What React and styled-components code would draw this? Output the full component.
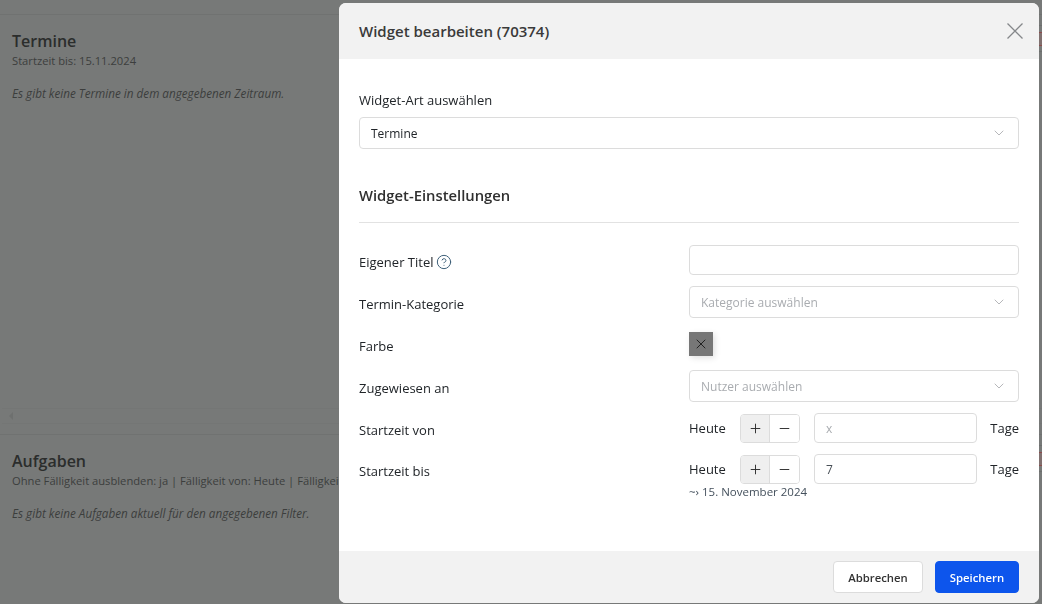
import React from 'react';
import styled, { createGlobalStyle } from 'styled-components';
import { X, ChevronDown, Plus, Minus, CircleHelp } from 'lucide-react';

const GlobalStyle = createGlobalStyle`
  html, body {
    margin: 0;
    padding: 0;
    height: 100%;
    overflow: hidden;
    background: #777978;
  }
  * {
    box-sizing: border-box;
  }
  body {
    font-family: "Open Sans", "Noto Sans", sans-serif;
    font-size: 13px;
    color: #212529;
  }
`;

const Dashboard = styled.div`
  height: 604px;
  padding-top: 14px;
  overflow: hidden;
  display: flex;
  flex-direction: column;
`;

const WidgetCard = styled.section`
  position: relative;
  height: ${({ $height }) => $height}px;
  flex: none;
  border-top: 1px solid #707271;
  padding: 18px 12px 0;
  white-space: nowrap;
`;

const CardActions = styled.div`
  position: absolute;
  top: 10px;
  left: 1020px;
  width: 30px;
  height: 27px;
  padding-top: 6px;
  border-top: 1px solid #6d6f6e;
  border-bottom: 1px solid #6d6f6e;
`;

const DeleteAction = styled.div`
  height: 14px;
  border: 1px solid #8d4c4c;
  background: #80706f;
`;

const Resizer = styled.div`
  height: 16px;
  flex: none;
  margin: 0 0 10px 2px;
  padding-left: 7px;
  display: flex;
  align-items: center;
  border-top: 1px solid #747675;
  border-bottom: 1px solid #747675;
  color: #6e706f;
`;

const WidgetTitle = styled.h2`
  margin: 0;
  font-size: 16px;
  line-height: 17px;
  font-weight: 600;
  color: #2b2d2c;
`;

const WidgetMeta = styled.div`
  margin-top: 3px;
  font-size: 11.2px;
  line-height: 15px;
  color: #3c3e3d;
`;

const WidgetEmpty = styled.p`
  margin: 18px 0 0;
  font-size: 11.7px;
  line-height: 15px;
  font-style: italic;
  color: #3c3e3d;
`;

const Modal = styled.div`
  position: fixed;
  left: 339px;
  top: 3px;
  width: 700px;
  height: 600px;
  display: flex;
  flex-direction: column;
  background: #fff;
  border-radius: 7px;
  overflow: hidden;
`;

const ModalHeader = styled.header`
  height: 56px;
  flex: none;
  padding: 0 16px 0 20px;
  display: flex;
  align-items: center;
  justify-content: space-between;
  background: #f2f2f2;
`;

const ModalTitle = styled.h1`
  margin: 0;
  font-size: 15px;
  font-weight: 600;
  color: #3a3a3a;
`;

const CloseButton = styled.button`
  width: 16px;
  height: 16px;
  padding: 0;
  display: flex;
  border: 0;
  background: none;
  color: #85878a;
`;

const ModalBody = styled.main`
  flex: 1;
  padding: 32px 20px 0;
`;

const FieldLabel = styled.label`
  display: block;
  font-size: 13px;
  line-height: 18px;
  color: #212529;
`;

const Select = styled.div`
  height: 32px;
  margin-top: ${({ $top }) => $top || 0}px;
  padding: 0 11px;
  display: flex;
  align-items: center;
  justify-content: space-between;
  border: 1px solid #dcdcdc;
  border-radius: 4px;
  background: #fff;
  font-size: 12px;
  color: ${({ $placeholder }) => ($placeholder ? '#a9acb0' : '#212529')};

  svg {
    color: #a3a5a8;
  }
`;

const SectionTitle = styled.h3`
  margin: 36px 0 0;
  padding-bottom: 17px;
  border-bottom: 1px solid #e2e2e2;
  font-size: 14.8px;
  line-height: 20px;
  font-weight: 600;
  color: #303030;
`;

const SettingsGrid = styled.div`
  margin-top: 22px;
  display: grid;
  grid-template-columns: 330px 330px;
  row-gap: 11px;
  align-items: center;
`;

const RowLabel = styled(FieldLabel)`
  display: flex;
  align-items: center;
  gap: 3px;
  padding-top: 3px;

  svg {
    color: #3d5f78;
  }
`;

const TextInput = styled.div`
  height: 30px;
  padding: 0 11px;
  display: flex;
  align-items: center;
  border: 1px solid #dcdcdc;
  border-radius: 4px;
  background: #fff;
  font-size: 12px;
  color: ${({ $placeholder }) => ($placeholder ? '#a9acb0' : '#495057')};
`;

const ColorSwatch = styled.div`
  width: 24px;
  height: 24px;
  margin: 3px 0;
  display: flex;
  align-items: center;
  justify-content: center;
  background: #777;
  color: #222;
  box-shadow: 2px 2px 6px rgba(0, 0, 0, 0.12);
`;

const DayControl = styled.div`
  display: flex;
  align-items: center;
`;

const DayText = styled.span`
  font-size: 13px;
  color: #212529;
  width: ${({ $width }) => $width}px;
  text-align: ${({ $align }) => $align || 'left'};
`;

const SignGroup = styled.div`
  width: 60px;
  height: 29px;
  margin-right: 14px;
  display: flex;
  border: 1px solid #dcdcdc;
  border-radius: 4px;
  overflow: hidden;
`;

const SignButton = styled.div`
  flex: ${({ $active }) => ($active ? '0 0 28px' : 1)};
  display: flex;
  align-items: center;
  justify-content: center;
  color: #2a2a2a;
  background: ${({ $active }) => ($active ? '#efefef' : '#fff')};
  & + & {
    border-left: 1px solid #dcdcdc;
  }
`;

const DayInput = styled(TextInput)`
  width: 163px;
`;

const DateHint = styled.div`
  grid-column: 2;
  margin-top: -10px;
  font-size: 11.5px;
  line-height: 14px;
  color: #44505c;
`;

const ModalFooter = styled.footer`
  height: 52px;
  flex: none;
  padding: 10px 20px 0;
  display: flex;
  justify-content: flex-end;
  gap: 12px;
  background: #f2f2f2;
`;

const Button = styled.button`
  height: 32px;
  width: ${({ $primary }) => ($primary ? 84 : 90)}px;
  padding: 0;
  border-radius: 4px;
  border: 1px solid ${({ $primary }) => ($primary ? '#0d55ec' : '#dcdcdc')};
  background: ${({ $primary }) => ($primary ? '#0d55ec' : '#fff')};
  color: ${({ $primary }) => ($primary ? '#fff' : '#333')};
  font-family: inherit;
  font-size: 11.3px;
  font-weight: 600;
`;

const DayRow = ({ placeholder, value }) => (
  <DayControl>
    <DayText $width={51}>Heute</DayText>
    <SignGroup>
      <SignButton $active><Plus size={15} strokeWidth={1.5} /></SignButton>
      <SignButton><Minus size={15} strokeWidth={1.5} /></SignButton>
    </SignGroup>
    <DayInput $placeholder={!!placeholder}>{placeholder || value}</DayInput>
    <DayText $width={42} $align="right">Tage</DayText>
  </DayControl>
);

const App = () => (
  <>
    <GlobalStyle />
    <Dashboard>
      <WidgetCard $height={394}>
        <WidgetTitle>Termine</WidgetTitle>
        <WidgetMeta>Startzeit bis: 15.11.2024</WidgetMeta>
        <WidgetEmpty>Es gibt keine Termine in dem angegebenen Zeitraum.</WidgetEmpty>
        <CardActions><DeleteAction /></CardActions>
      </WidgetCard>
      <Resizer>
        <svg width="5" height="8" viewBox="0 0 5 8"><path d="M4 0L0 4l4 4z" fill="currentColor" /></svg>
      </Resizer>
      <WidgetCard $height={170}>
        <WidgetTitle>Aufgaben</WidgetTitle>
        <WidgetMeta>Ohne Fälligkeit ausblenden: ja | Fälligkeit von: Heute | Fälligkeit</WidgetMeta>
        <WidgetEmpty>Es gibt keine Aufgaben aktuell für den angegebenen Filter.</WidgetEmpty>
        <CardActions><DeleteAction /></CardActions>
      </WidgetCard>
    </Dashboard>

    <Modal>
      <ModalHeader>
        <ModalTitle>Widget bearbeiten (70374)</ModalTitle>
        <CloseButton>
          <svg width="16" height="16" viewBox="0 0 16 16" fill="none" stroke="currentColor" strokeWidth="1.3">
            <path d="M0.5 0.5L15.5 15.5M15.5 0.5L0.5 15.5" />
          </svg>
        </CloseButton>
      </ModalHeader>
      <ModalBody>
        <FieldLabel>Widget-Art auswählen</FieldLabel>
        <Select $top={8}>
          Termine
          <ChevronDown size={16} strokeWidth={1.2} />
        </Select>
        <SectionTitle>Widget-Einstellungen</SectionTitle>
        <SettingsGrid>
          <RowLabel>Eigener Titel <CircleHelp size={16} strokeWidth={1.5} /></RowLabel>
          <TextInput />
          <RowLabel>Termin-Kategorie</RowLabel>
          <Select $placeholder>
            Kategorie auswählen
            <ChevronDown size={16} strokeWidth={1.2} />
          </Select>
          <RowLabel>Farbe</RowLabel>
          <ColorSwatch><X size={16} strokeWidth={1.5} /></ColorSwatch>
          <RowLabel>Zugewiesen an</RowLabel>
          <Select $placeholder>
            Nutzer auswählen
            <ChevronDown size={16} strokeWidth={1.2} />
          </Select>
          <RowLabel>Startzeit von</RowLabel>
          <DayRow placeholder="x" />
          <RowLabel>Startzeit bis</RowLabel>
          <DayRow value="7" />
          <DateHint>~› 15. November 2024</DateHint>
        </SettingsGrid>
      </ModalBody>
      <ModalFooter>
        <Button>Abbrechen</Button>
        <Button $primary>Speichern</Button>
      </ModalFooter>
    </Modal>
  </>
);

export default App;
